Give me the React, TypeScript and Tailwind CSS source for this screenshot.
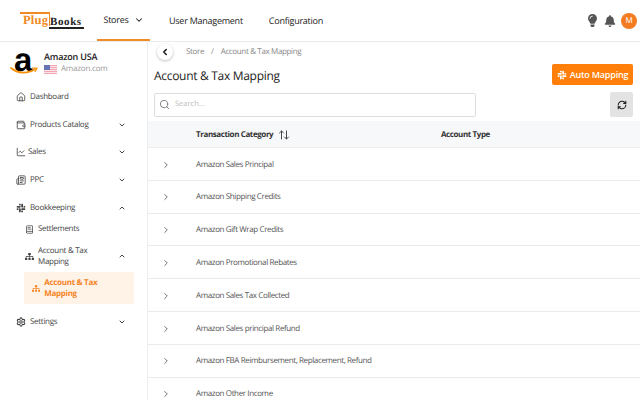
import {
  ArrowUpDown,
  BookText,
  ChevronDown,
  ChevronLeft,
  ChevronRight,
  ChevronUp,
  Home,
  LineChart,
  RefreshCw,
  Search,
  Settings,
  Wallet,
  Newspaper,
} from "lucide-react";
import { FaBell, FaLightbulb, FaSitemap, FaSlack } from "react-icons/fa";

const rows = [
  "Amazon Sales Principal",
  "Amazon Shipping Credits",
  "Amazon Gift Wrap Credits",
  "Amazon Promotional Rebates",
  "Amazon Sales Tax Collected",
  "Amazon Sales principal Refund",
  "Amazon FBA Reimbursement, Replacement, Refund",
  "Amazon Other Income",
];

function Logo() {
  return (
    <div className="relative w-[66px] h-[18px] ml-[20px] font-['Liberation_Serif',serif] leading-none">
      <div className="absolute left-0 top-0 w-[30px] h-[14px] border-t-2 border-r border-[#f08a24]" />
      <span className="absolute left-[3px] top-[2px] text-[12.5px] font-bold text-[#f08a24] tracking-[0.2px]">Plug</span>
      <span className="absolute left-[30px] top-[5px] text-[11px] font-bold text-[#222] tracking-[0.6px]">Books</span>
      <div className="absolute left-[29px] top-[15px] w-[35px] h-[2px] bg-[#222]" />
    </div>
  );
}

function NavItem({ icon, label, open, tight }: { icon: React.ReactNode; label: string; open?: boolean; tight?: boolean }) {
  return (
    <div className="flex items-center h-[27.7px] pl-[16px] pr-[21px] text-[#444]">
      <span className="w-[10px] flex justify-center text-[#444]">{icon}</span>
      <span className={`flex-1 text-[8px] tracking-[-0.3px] ${tight ? "ml-[2px]" : "ml-[4px]"}`}>{label}</span>
      {open === undefined ? null : open ? (
        <ChevronUp size={8} strokeWidth={3} />
      ) : (
        <ChevronDown size={8} strokeWidth={3} />
      )}
    </div>
  );
}

function Sidebar() {
  return (
    <aside className="w-[148px] shrink-0 border-r border-[#eeeeee] bg-white">
      <div className="flex items-start pt-[9px] pl-[10px] h-[41px]">
        <div className="relative w-[28px] h-[28px]">
          <span className="absolute left-[4px] -top-[11px] text-[33px] leading-[40px] font-bold text-black font-['Liberation_Sans',sans-serif]">a</span>
          <svg className="absolute left-0 top-[15px]" width="28" height="10" viewBox="0 0 28 10">
            <path d="M1 2 C8 8 18 8 25 3" fill="none" stroke="#f79009" strokeWidth="1.8" strokeLinecap="round" />
            <path d="M22 2 L27 2 L25 6" fill="none" stroke="#f79009" strokeWidth="1.2" />
          </svg>
        </div>
        <div className="ml-[6px]">
          <div className="text-[9px] font-semibold leading-[12px] text-[#222] tracking-[-0.2px]">Amazon USA</div>
          <div className="flex items-center">
            <svg width="13" height="9" viewBox="0 0 13 9">
              <rect width="13" height="9" fill="#f3a6b4" />
              <rect y="1" width="13" height="1" fill="#fbe3e7" />
              <rect y="3" width="13" height="1" fill="#fbe3e7" />
              <rect y="5" width="13" height="1" fill="#fbe3e7" />
              <rect y="7" width="13" height="1" fill="#fbe3e7" />
              <rect width="6" height="5" fill="#6673b5" />
            </svg>
            <span className="ml-[4px] text-[8px] text-[#999] tracking-[-0.2px]">Amazon.com</span>
          </div>
        </div>
      </div>
      <div>
        <NavItem icon={<Home size={10} />} label="Dashboard" />
        <NavItem icon={<Wallet size={10} />} label="Products Catalog" open={false} />
        <NavItem icon={<LineChart size={10} />} label="Sales" open={false} tight />
        <NavItem icon={<Newspaper size={10} />} label="PPC" open={false} />
        <NavItem icon={<FaSlack size={10} />} label="Bookkeeping" open />
      </div>
      <div className="flex items-center h-[16px] pl-[25px] text-[8px] text-[#444] tracking-[-0.3px]">
        <BookText size={9} />
        <span className="ml-[4px]">Settlements</span>
      </div>
      <div className="flex items-center pl-[25px] pr-[21px] mt-[5px] h-[28px] text-[#444]">
        <FaSitemap size={9} />
        <span className="ml-[4px] flex-1 text-[8px] leading-[11px] tracking-[-0.3px]">Account &amp; Tax Mapping</span>
        <ChevronUp size={8} strokeWidth={3} />
      </div>
      <div className="flex items-center ml-[24px] mr-[13px] mt-[2px] h-[32px] pl-[8px] pr-[10px] bg-[#fff3e8] rounded-[2px] text-[#f5841f]">
        <FaSitemap size={9} />
        <span className="ml-[4px] text-[8px] leading-[11px] font-bold tracking-[-0.3px]">Account &amp; Tax Mapping</span>
      </div>
      <div className="mt-[4px]">
        <NavItem icon={<Settings size={10} strokeWidth={2.5} />} label="Settings" open={false} />
      </div>
    </aside>
  );
}

export default function App() {
  return (
    <div className="w-[640px] h-[400px] overflow-hidden bg-white flex flex-col font-['Open_Sans',sans-serif] [text-rendering:geometricPrecision]">
      <header className="h-[42px] shrink-0 flex items-center border-b border-[#ebebeb]">
        <div className="w-[97px]">
          <Logo />
        </div>
        <div className="w-[53px] h-[41px] flex items-center justify-center border-b-2 border-[#f28c28] text-[9px] text-[#222] font-medium tracking-[-0.25px]">
          Stores
          <ChevronDown size={10} strokeWidth={2.5} className="ml-[5px]" />
        </div>
        <div className="ml-[19px] text-[9px] font-medium text-[#222] tracking-[-0.25px]">User Management</div>
        <div className="ml-[26px] text-[9px] font-medium text-[#222] tracking-[-0.25px]">Configuration</div>
        <div className="ml-auto flex items-center pr-[3px] text-[#555]">
          <FaLightbulb size={13} />
          <FaBell size={12} className="ml-[5px]" />
          <div className="ml-[5px] w-[16px] h-[16px] rounded-full bg-[#f47c20] text-white text-[8px] flex items-center justify-center">M</div>
        </div>
      </header>
      <div className="flex flex-1 min-h-0">
        <Sidebar />
        <main className="flex-1 min-w-0">
          <div className="flex items-center h-[19px] pl-[9px] text-[8px] text-[#888] tracking-[-0.35px]">
            <div className="w-[16px] h-[16px] rounded-full bg-white shadow-[0_1px_3px_rgba(0,0,0,0.25)] flex items-center justify-center text-[#111]">
              <ChevronLeft size={10} strokeWidth={3.5} />
            </div>
            <span className="ml-[13px]">Store</span>
            <span className="ml-[7px]">/</span>
            <span className="ml-[7px]">Account &amp; Tax Mapping</span>
          </div>
          <div className="flex items-start justify-between pl-[6px] pr-[7px] mt-[3px] h-[28px]">
            <h1 className="text-[12px] font-medium text-[#222] leading-[24px] tracking-[-0.3px]">Account &amp; Tax Mapping</h1>
            <button className="w-[81px] h-[21px] bg-[#ff7f0a] rounded-[2px] text-white text-[9px] font-semibold flex items-center justify-center tracking-[-0.2px]">
              <FaSlack size={10} />
              <span className="ml-[3px]">Auto Mapping</span>
            </button>
          </div>
          <div className="flex items-center justify-between pl-[6px] pr-[7px]">
            <div className="w-[322px] h-[24px] border border-[#dddddd] rounded-[2px] flex items-center pl-[4px]">
              <Search size={11} className="text-[#777]" />
              <span className="ml-[5px] text-[7.5px] text-[#bbb]">Search...</span>
            </div>
            <div className="w-[23px] h-[25px] bg-[#e3e3e3] rounded-[2px] flex items-center justify-center text-[#222]">
              <RefreshCw size={10} strokeWidth={2.6} />
            </div>
          </div>
          <div className="mt-[4px] h-[27px] pt-[2px] bg-[#f7f8f9] border-b border-[#eeeeee] flex items-center text-[8px] font-bold text-[#333] tracking-[-0.4px]">
            <span className="ml-[48px] w-[245px] flex items-center">
              Transaction Category
              <ArrowUpDown size={12} strokeWidth={1.8} className="ml-[5px]" />
            </span>
            <span>Account Type</span>
          </div>
          {rows.map((r) => (
            <div key={r} className="h-[32.8px] pt-[1.5px] border-b border-[#ebebeb] flex items-center text-[8px] text-[#555] tracking-[-0.38px]">
              <ChevronRight size={10} className="ml-[13px] text-[#555]" />
              <span className="ml-[25px]">{r}</span>
            </div>
          ))}
        </main>
      </div>
    </div>
  );
}
